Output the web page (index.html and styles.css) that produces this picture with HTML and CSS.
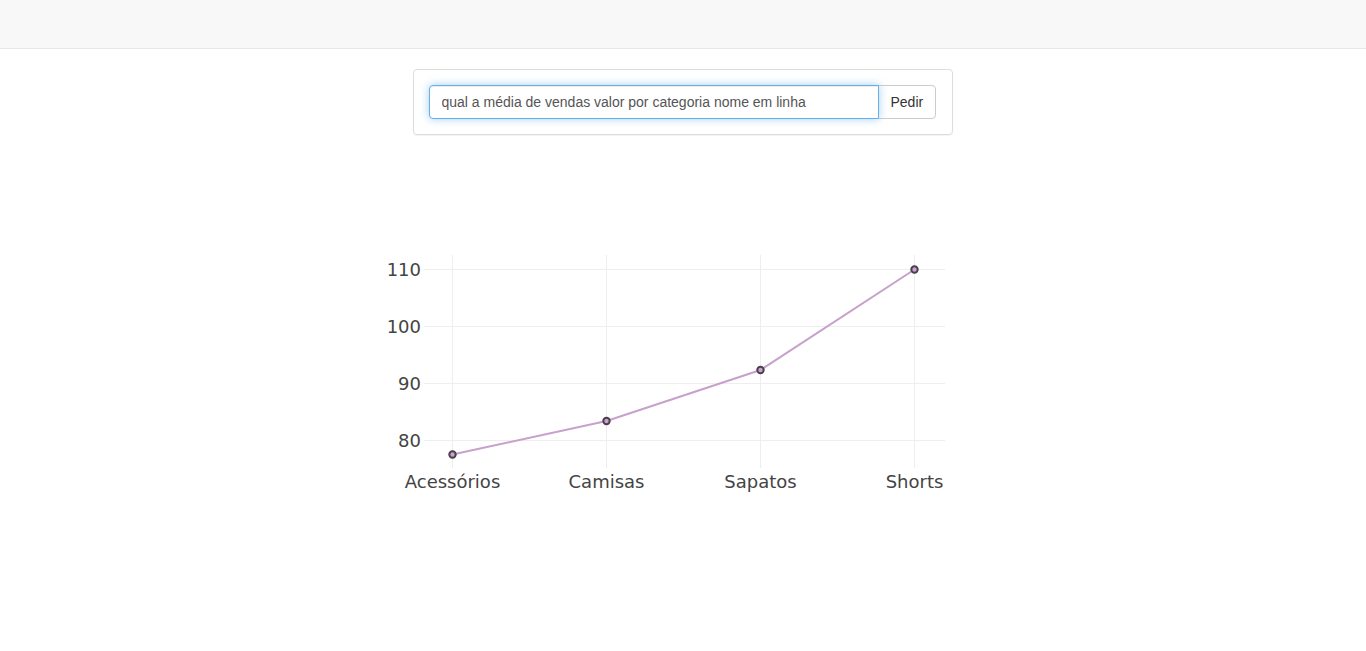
FILE: index.html
```html
<!DOCTYPE html>
<html lang="pt">
<head>
<meta charset="utf-8">
<title>Consulta</title>
<link rel="stylesheet" href="styles.css">
</head>
<body>
<nav class="navbar"></nav>
<main class="container">
  <form class="panel">
    <div class="input-group">
      <input class="form-control" type="text" value="qual a média de vendas valor por categoria nome em linha" autofocus>
      <button class="btn" type="button">Pedir</button>
    </div>
  </form>
  <div class="chart">
    <svg width="600" height="320" viewBox="0 0 600 320" xmlns="http://www.w3.org/2000/svg">
      <g class="grid">
        <line x1="41" y1="69.5" x2="562" y2="69.5"/>
        <line x1="41" y1="126.5" x2="562" y2="126.5"/>
        <line x1="41" y1="183.5" x2="562" y2="183.5"/>
        <line x1="41" y1="240.5" x2="562" y2="240.5"/>
        <line x1="69.5" y1="55" x2="69.5" y2="268"/>
        <line x1="223.5" y1="55" x2="223.5" y2="268"/>
        <line x1="377.5" y1="55" x2="377.5" y2="268"/>
        <line x1="531.5" y1="55" x2="531.5" y2="268"/>
      </g>
      <g class="ylabels">
        <text x="38" y="76">110</text>
        <text x="38" y="133">100</text>
        <text x="38" y="190">90</text>
        <text x="38" y="247">80</text>
      </g>
      <g class="xlabels">
        <text x="69.5" y="288">Acessórios</text>
        <text x="223.5" y="288">Camisas</text>
        <text x="377.5" y="288">Sapatos</text>
        <text x="531.5" y="288">Shorts</text>
      </g>
      <polyline class="trace" points="69.5,254.5 223.5,221 377.5,170 531.5,69.5"/>
      <g class="markers">
        <circle cx="69.5" cy="254.5" r="3.2"/>
        <circle cx="223.5" cy="221" r="3.2"/>
        <circle cx="377.5" cy="170" r="3.2"/>
        <circle cx="531.5" cy="69.5" r="3.2"/>
      </g>
    </svg>
  </div>
</main>
</body>
</html>
```
FILE: styles.css
```css
* { box-sizing: border-box; }
html, body {
  margin: 0;
  padding: 0;
  background: #fff;
  font-family: "Liberation Sans", Arial, sans-serif;
  font-size: 14px;
  color: #333;
}
.navbar {
  height: 49px;
  background: #f8f8f8;
  border-bottom: 1px solid #e7e7e7;
  margin-bottom: 20px;
}
.container {
  display: flex;
  flex-direction: column;
  align-items: center;
}
.panel {
  width: 540px;
  margin: 0 0 0 -1px;
  padding: 15px;
  border: 1px solid #ddd;
  border-radius: 4px;
  box-shadow: 0 1px 1px rgba(0,0,0,0.05);
}
.input-group {
  display: flex;
}
.form-control {
  width: 450px;
  height: 34px;
  padding: 6px 12px;
  font-family: "Liberation Sans", Arial, sans-serif;
  font-size: 14px;
  color: #555;
  caret-color: #333;
  border: 1px solid #66afe9;
  border-radius: 4px 0 0 4px;
  outline: 0;
  box-shadow: inset 0 1px 1px rgba(0,0,0,.075), 0 0 8px rgba(102,175,233,.6);
  position: relative;
  z-index: 2;
}
.btn {
  width: 58px;
  height: 34px;
  margin-left: -1px;
  padding: 6px 12px;
  font-family: "Liberation Sans", Arial, sans-serif;
  font-size: 14px;
  color: #333;
  background: #fff;
  border: 1px solid #ccc;
  border-radius: 0 4px 4px 0;
}
.chart {
  margin-top: 65px;
  width: 600px;
}
.chart svg { display: block; }
.grid line {
  stroke: #eeeeee;
  stroke-width: 1;
}
.ylabels text, .xlabels text {
  font-family: "DejaVu Sans", Verdana, sans-serif;
  font-size: 18px;
  fill: #444;
}
.ylabels text { text-anchor: end; }
.xlabels text { text-anchor: middle; }
.trace {
  fill: none;
  stroke: #c7a1cb;
  stroke-width: 2;
}
.markers circle {
  fill: #c9a3cc;
  stroke: #4a3f4b;
  stroke-width: 2;
}
```
